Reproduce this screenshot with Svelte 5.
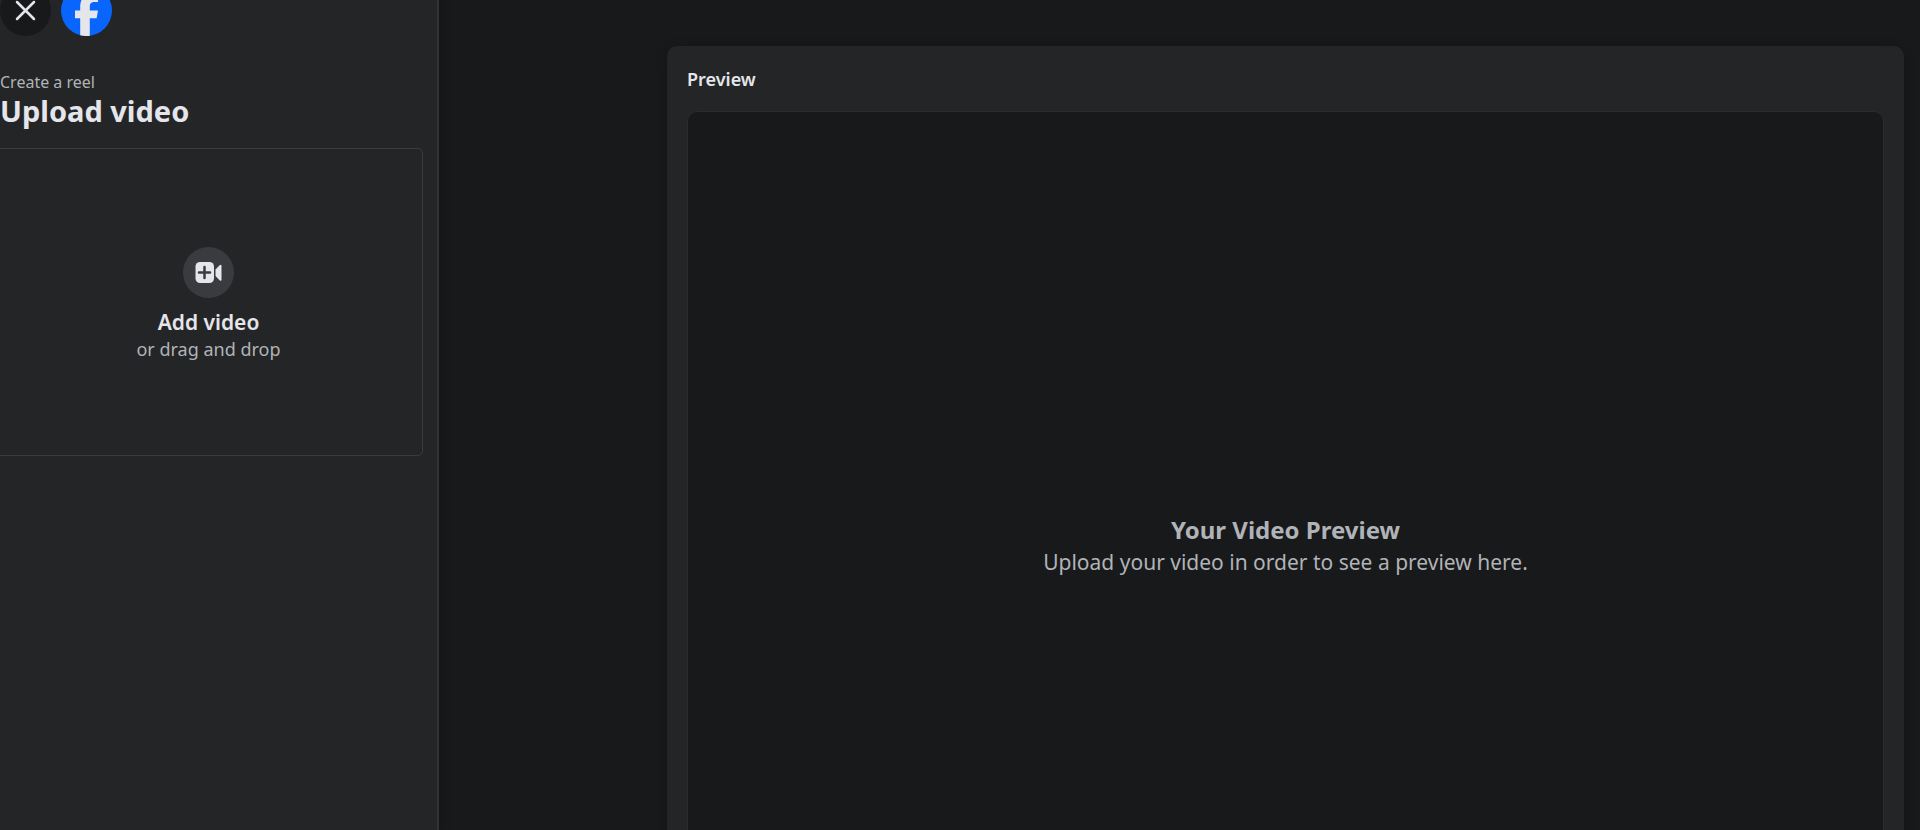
<script>
  let fileName = $state('');

  function pick(event) {
    fileName = event.currentTarget.files?.[0]?.name ?? '';
  }
</script>

<div class="page">
  <aside class="sidebar">
    <header class="topbar">
      <button class="round close" type="button" aria-label="Close">
        <svg viewBox="0 0 51 51" aria-hidden="true">
          <path d="M17 17 34 34M34 17 17 34" fill="none" stroke="#e4e6eb" stroke-width="2.5" stroke-linecap="round" />
        </svg>
      </button>
      <a class="round brand" href="/" aria-label="Facebook">
        <svg viewBox="0 0 51 51" aria-hidden="true">
          <circle cx="25.5" cy="25.5" r="25.5" fill="#0866ff" />
          <path
            d="M19.2 50.2V33.2H14V25.4h5.2v-3.3c0-8.6 3.9-12.6 12.3-12.6 1.6 0 4.4.3 5.5.6v7c-.6-.1-1.7-.1-3-.1-4.2 0-5.2 1.6-5.2 5.6v2.8H37l-1.4 7.8h-6.8v17.6a25.5 25.5 0 0 1-9.6-.6Z"
            fill="#e4e6eb"
          />
        </svg>
      </a>
    </header>

    <div class="heading">
      <p class="eyebrow">Create a reel</p>
      <h1>Upload video</h1>
    </div>

    <label class="dropzone">
      <input type="file" accept="video/*" onchange={pick} />
      <span class="round add">
        <svg viewBox="0 0 51 51" aria-hidden="true">
          <rect x="12.5" y="15" width="18.5" height="21" rx="4.5" fill="#e4e6eb" />
          <path d="M21.5 20v11M16 25.500h11" stroke="#3a3b3e" stroke-width="2.5" stroke-linecap="round" />
          <path d="M32.5 22.6 36.600 18.300Q38.500 17 38.500 19v13.500Q38.500 34.500 36.600 33.200L32.500 29Z" fill="#e4e6eb" />
        </svg>
      </span>
      <span class="add-title">{fileName || 'Add video'}</span>
      <span class="add-hint">or drag and drop</span>
    </label>
  </aside>

  <main>
    <section class="card">
      <h2>Preview</h2>
      <div class="preview">
        <h3>Your Video Preview</h3>
        <p>Upload your video in order to see a preview here.</p>
      </div>
    </section>
  </main>
</div>

<style>
  :global(body) {
    background: #18191a;
  }

  .page {
    display: flex;
    height: 100vh;
    overflow: hidden;
    background: #18191a;
    color: #e4e6eb;
    font-family: 'Segoe UI', 'Noto Sans', sans-serif;
  }

  h1,
  h2,
  h3,
  p {
    margin: 0;
  }

  .sidebar {
    box-sizing: border-box;
    flex: 0 0 439px;
    padding-right: 14px;
    background: #242526;
    border-right: 2px solid #323335;
    box-shadow: 0 0 12px rgba(0, 0, 0, 0.3);
  }

  .topbar {
    display: flex;
    gap: 10px;
    margin-top: -15px;
  }

  .round {
    display: block;
    width: 51px;
    height: 51px;
    padding: 0;
    border: 0;
    border-radius: 50%;
  }

  .round svg {
    display: block;
    width: 100%;
    height: 100%;
  }

  .close {
    background: #18191a;
    cursor: pointer;
  }

  .heading {
    margin-top: 36px;
  }

  .eyebrow {
    color: #b0b3b8;
    font-size: 16px;
    line-height: 20px;
  }

  h1 {
    font-size: 29px;
    font-weight: 700;
    line-height: 38px;
  }

  .dropzone {
    box-sizing: border-box;
    display: flex;
    flex-direction: column;
    align-items: center;
    justify-content: center;
    height: 308px;
    margin: 18px 0 0 -6px;
    padding-top: 4px;
    border: 1px solid #3a3b3c;
    border-radius: 5px;
    cursor: pointer;
  }

  .dropzone input {
    position: absolute;
    width: 1px;
    height: 1px;
    opacity: 0;
  }

  .add {
    background: #3a3b3e;
  }

  .add-title {
    margin-top: 10px;
    font-size: 21px;
    font-weight: 600;
    line-height: 28px;
  }

  .add-hint {
    color: #b0b3b8;
    font-size: 18px;
    line-height: 26px;
  }

  main {
    flex: 1;
    min-width: 0;
    padding: 46px 16px 0 228px;
  }

  .card {
    padding: 20px;
    background: #242526;
    border-radius: 10px;
    box-shadow: 0 2px 12px rgba(0, 0, 0, 0.2);
  }

  h2 {
    font-size: 18px;
    font-weight: 600;
    line-height: 26px;
  }

  .preview {
    box-sizing: border-box;
    display: flex;
    flex-direction: column;
    align-items: center;
    justify-content: center;
    min-height: 870px;
    margin-top: 19px;
    background: #18191a;
    border: 1px solid #2b2c2e;
    border-radius: 10px;
    color: #b0b3b8;
    text-align: center;
  }

  h3 {
    font-size: 24px;
    font-weight: 700;
    line-height: 32px;
  }

  .preview p {
    font-size: 21px;
    line-height: 32px;
  }
</style>
